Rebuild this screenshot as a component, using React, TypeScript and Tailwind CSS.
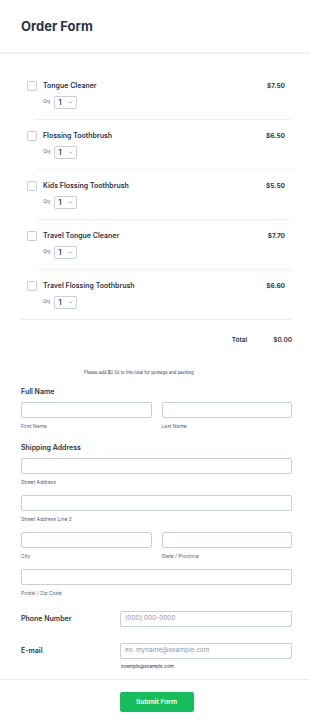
import React from 'react';
import { ChevronDown } from 'lucide-react';

const products = [
  { name: 'Tongue Cleaner', price: '$7.50' },
  { name: 'Flossing Toothbrush', price: '$6.50' },
  { name: 'Kids Flossing Toothbrush', price: '$5.50' },
  { name: 'Travel Tongue Cleaner', price: '$7.70' },
  { name: 'Travel Flossing Toothbrush', price: '$6.60' },
];

const Field = ({ sub, className = '' }: { sub?: string; className?: string }) => (
  <div className={className}>
    <div className="h-[16px] rounded-[2px] border border-[#c8ceda] bg-white" />
    {sub && <div className="mt-[5px] text-[5px] leading-[6px] text-[#57647e]">{sub}</div>}
  </div>
);

export default function App() {
  return (
    <div className="min-h-[728px] bg-white text-[#2c3345]" style={{ fontFamily: 'Inter, "Liberation Sans", sans-serif' }}>
      <div className="border-b-2 border-[#f1f1f4] px-[21px] pt-[18px] pb-[18px]">
        <h1 className="text-[13px] font-bold leading-[16px]">Order Form</h1>
      </div>

      <div className="pl-[21px] pr-[18px] pt-[16px]">
        {products.map((p, i) => (
          <div key={p.name}>
            <div className="pt-[11px] pb-[10px]">
              <div className="flex h-[10px] items-center">
                <div className="ml-[6px] h-[10px] w-[10px] rounded-[1px] border border-[#c8ceda]" />
                <span className="ml-[6px] text-[7px] font-semibold leading-[10px]">{p.name}</span>
                <span className="ml-auto mr-[7px] text-[6.5px] font-bold leading-[10px]">{p.price}</span>
              </div>
              <div className="mt-[5px] ml-[22px] flex items-center">
                <span className="text-[4.5px] text-[#57647e]">Qty</span>
                <div className="ml-[3px] flex h-[13px] w-[23px] items-center rounded-[2px] border border-[#c8ceda] pl-[4px] pr-[2px]">
                  <span className="text-[7px] font-semibold leading-none">1</span>
                  <ChevronDown className="ml-auto mr-[1px] h-[5px] w-[5px] text-[#57647e]" strokeWidth={2.5} />
                </div>
              </div>
            </div>
            {i < products.length - 1 ? (
              <div className="ml-[14px] border-b border-dotted border-[#e3e5ea]" />
            ) : (
              <div className="border-b border-[#eaebf0]" />
            )}
          </div>
        ))}

        <div className="mt-[17px] flex h-[8px] items-center justify-end text-[6.5px] font-semibold">
          <span>Total</span>
          <span className="ml-[26px]">$0.00</span>
        </div>

        <div className="mt-[25px] pl-[63px] text-[4.3px] leading-[6px] text-[#2c3345]">
          Please add $0.50 to this total for postage and packing
        </div>

        <div className="mt-[11px] text-[7px] font-semibold leading-[9px]">Full Name</div>
        <div className="mt-[6px] grid grid-cols-2 gap-[10px]">
          <Field sub="First Name" />
          <Field sub="Last Name" />
        </div>

        <div className="mt-[14px] text-[7px] font-semibold leading-[9px]">Shipping Address</div>
        <Field sub="Street Address" className="mt-[6px]" />
        <Field sub="Street Address Line 2" className="mt-[10px]" />
        <div className="mt-[10px] grid grid-cols-2 gap-[10px]">
          <Field sub="City" />
          <Field sub="State / Province" />
        </div>
        <Field sub="Postal / Zip Code" className="mt-[10px]" />

        <div className="mt-[15px] flex items-center">
          <div className="w-[99px] text-[7px] font-semibold">Phone Number</div>
          <div className="flex h-[16px] flex-1 items-center rounded-[2px] border border-[#c8ceda] px-[4px] text-[6.5px] text-[#8c96aa]">
            (000) 000-0000
          </div>
        </div>

        <div className="mt-[16px] flex items-start">
          <div className="flex h-[16px] w-[99px] items-center text-[7px] font-semibold">E-mail</div>
          <div className="flex-1">
            <div className="flex h-[16px] items-center rounded-[2px] border border-[#c8ceda] px-[4px] text-[6.5px] text-[#8c96aa]">
              ex: myname@example.com
            </div>
            <div className="mt-[4px] ml-[1px] text-[4.7px] leading-[6px] text-[#2c3345]">example@example.com</div>
          </div>
        </div>
      </div>

      <div className="mt-[10px] border-b border-[#eaebf0]" />

      <div className="flex justify-center pl-[3px] pt-[12px]">
        <button className="h-[20px] w-[74px] rounded-[2px] bg-[#18bd5b] text-[6.7px] font-semibold text-white">
          Submit Form
        </button>
      </div>
    </div>
  );
}
